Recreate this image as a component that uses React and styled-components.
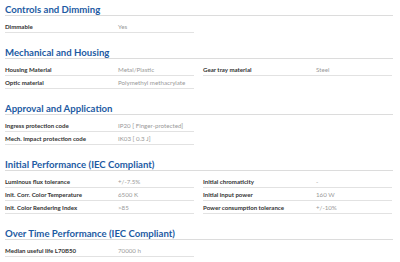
import React from "react";
import styled, { createGlobalStyle } from "styled-components";

const Global = createGlobalStyle`
  html, body { margin: 0; padding: 0; background: #fff; }
  body { font-family: Lato, "Open Sans", "Liberation Sans", sans-serif; }
`;

const Page = styled.div`
  width: 388px;
  padding: 2px 0 0 5px;
`;

const Section = styled.section`
  & + & { margin-top: 12px; }
`;

const Heading = styled.h2`
  margin: 0;
  font-size: 9.6px;
  line-height: 10px;
  font-weight: 700;
  color: #1d5ba3;
  padding: 3px 0 0;
  border-bottom: 1px solid #dcdcdc;
`;

const Grid = styled.div`
  display: grid;
  grid-template-columns: 189px 189px;
  column-gap: 9px;
  margin-top: 4px;
`;

const Column = styled.div`
  display: flex;
  flex-direction: column;
`;

const Row = styled.div`
  display: grid;
  grid-template-columns: 113px 1fr;
  height: 12px;
  align-items: center;
  border-bottom: 1px solid #e2e2e2;
`;

const Label = styled.span`
  font-size: 6.1px;
  font-weight: 700;
  color: #333;
  white-space: nowrap;
`;

const Value = styled.span`
  font-size: 6.2px;
  font-weight: 400;
  color: #999;
  white-space: nowrap;
`;

const data = [
  {
    title: "Controls and Dimming",
    cols: [[["Dimmable", "Yes"]], []],
  },
  {
    title: "Mechanical and Housing",
    cols: [
      [["Housing Material", "Metal/Plastic"], ["Optic material", "Polymethyl methacrylate"]],
      [["Gear tray material", "Steel"]],
    ],
  },
  {
    title: "Approval and Application",
    cols: [
      [["Ingress protection code", "IP20 [ Finger-protected]"], ["Mech. impact protection code", "IK03 [ 0.3 J]"]],
      [],
    ],
  },
  {
    title: "Initial Performance (IEC Compliant)",
    cols: [
      [
        ["Luminous flux tolerance", "+/-7.5%"],
        ["Init. Corr. Color Temperature", "6500 K"],
        ["Init. Color Rendering Index", ">85"],
      ],
      [
        ["Initial chromaticity", "-"],
        ["Initial input power", "160 W"],
        ["Power consumption tolerance", "+/-10%"],
      ],
    ],
  },
  {
    title: "Over Time Performance (IEC Compliant)",
    cols: [[["Median useful life L70B50", "70000 h"]], []],
  },
];

export default function App() {
  return (
    <>
      <Global />
      <Page>
        {data.map((s) => (
          <Section key={s.title}>
            <Heading>{s.title}</Heading>
            <Grid>
              {s.cols.map((col, i) => (
                <Column key={i}>
                  {col.map(([l, v]) => (
                    <Row key={l}>
                      <Label>{l}</Label>
                      <Value>{v}</Value>
                    </Row>
                  ))}
                </Column>
              ))}
            </Grid>
          </Section>
        ))}
      </Page>
    </>
  );
}
